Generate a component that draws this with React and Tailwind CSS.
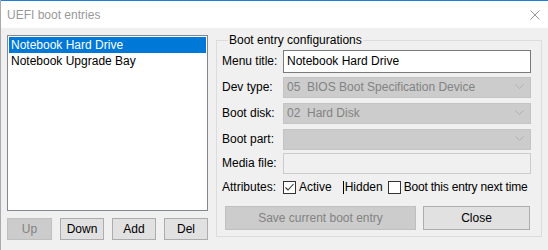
import React from 'react';

const font = { fontFamily: '"Liberation Sans", Arial, sans-serif' };

// Disabled combo box
const Combo = ({ value }) => (
  <div className="h-[21px] w-[248px] bg-[#cccccc] border border-[#c4c4c4] flex items-center justify-between pl-[3px] pr-[6px] text-[#838383]">
    <span className="whitespace-pre">{value}</span>
    <svg width="9" height="6" viewBox="0 0 9 6" className="text-[#b0b0b0]">
      <path d="M0.5 0.5 L4.5 4.5 L8.5 0.5" fill="none" stroke="currentColor" strokeWidth="1" />
    </svg>
  </div>
);

const Check = ({ checked }) => (
  <span className="w-[13px] h-[13px] border border-[#333333] bg-white flex items-center justify-center shrink-0">
    {checked && (
      <svg width="11" height="11" viewBox="0 0 11 11">
        <path d="M1.5 5.5 L4 8 L9.5 2" fill="none" stroke="#333333" strokeWidth="1.1" />
      </svg>
    )}
  </span>
);

const Row = ({ label, h = 'h-[26px]', children }) => (
  <div className={`flex items-center ${h}`}>
    <span className="w-[61px] shrink-0">{label}</span>
    {children}
  </div>
);

export default function App() {
  return (
    <div className="w-[548px] h-[250px] bg-[#f0f0f0] overflow-hidden text-[12px] text-black border-l border-[#aaaaaa]" style={font}>
      {/* title bar */}
      <div className="h-[28px] bg-white border-t border-[#1f7fd6] flex items-center justify-between pl-[6px] pr-[8px]">
        <span className="text-[#999999] text-[12px]">UEFI boot entries</span>
        <svg width="10" height="10" viewBox="0 0 10 10">
          <path d="M0.5 0.5 L9.5 9.5 M9.5 0.5 L0.5 9.5" stroke="#999999" strokeWidth="1" />
        </svg>
      </div>

      <div className="flex pl-[6px] pt-[6px] gap-[8px]">
        {/* left pane */}
        <div className="w-[201px] flex flex-col pt-[1px]">
          <div className="h-[176px] bg-white border border-[#828790] p-[1px]">
            <div className="h-[16px] bg-[#0078d7] text-white flex items-center pl-[2px]">Notebook Hard Drive</div>
            <div className="h-[16px] flex items-center pl-[2px]">Notebook Upgrade Bay</div>
          </div>
          <div className="flex justify-between mt-[7px]">
            <button className="w-[45px] h-[22px] bg-[#cccccc] border border-[#bfbfbf] text-[#838383]">Up</button>
            <button className="w-[44px] h-[22px] bg-[#e1e1e1] border border-[#adadad]">Down</button>
            <button className="w-[44px] h-[22px] bg-[#e1e1e1] border border-[#adadad]">Add</button>
            <button className="w-[44px] h-[22px] bg-[#e1e1e1] border border-[#adadad]">Del</button>
          </div>
        </div>

        {/* right group box */}
        <fieldset className="w-[326px] h-[203px] border border-[#dcdcdc] px-[5px]">
          <legend className="ml-[6px] px-[1px] leading-[12px]">Boot entry configurations</legend>
          <div className="flex flex-col pt-[2px]">
            <Row label="Menu title:">
              <div className="h-[23px] w-[248px] bg-white border border-[#7a7a7a] flex items-center pl-[3px]">Notebook Hard Drive</div>
            </Row>
            <Row label="Dev type:"><Combo value="05  BIOS Boot Specification Device" /></Row>
            <Row label="Boot disk:"><Combo value="02  Hard Disk" /></Row>
            <Row label="Boot part:"><Combo value="" /></Row>
            <Row label="Media file:" h="h-[22px]">
              <div className="h-[21px] w-[248px] bg-[#f0f0f0] border border-[#cccccc]" />
            </Row>
            <div className="flex items-center h-[26px] whitespace-nowrap">
              <span className="w-[61px] shrink-0">Attributes:</span>
              <Check checked />
              <span className="ml-[3px]">Active</span>
              <span className="ml-[11px] h-[13px] border-l border-black" />
              <span className="ml-[1px]">Hidden</span>
              <span className="ml-[5px]"><Check /></span>
              <span className="ml-[3px] tracking-[-0.2px]">Boot this entry next time</span>
            </div>
          </div>
          <div className="flex items-center gap-[7px] mt-[6px] pl-[3px]">
            <button className="w-[191px] h-[24px] bg-[#cccccc] border border-[#bfbfbf] text-[#838383]">Save current boot entry</button>
            <button className="w-[107px] h-[24px] bg-[#e1e1e1] border border-[#adadad]">Close</button>
          </div>
        </fieldset>
      </div>
    </div>
  );
}
